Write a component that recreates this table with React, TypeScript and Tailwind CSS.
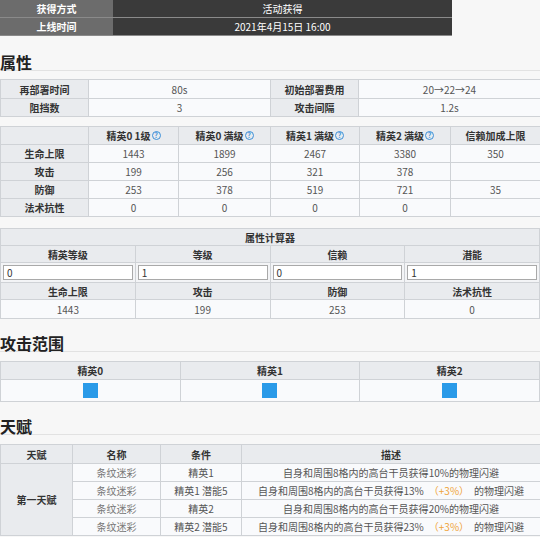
import React from "react";

const font = { fontFamily: '"Noto Sans CJK SC", "Noto Sans", sans-serif' };

const statRows = [
  { label: "生命上限", values: ["1443", "1899", "2467", "3380", "350"] },
  { label: "攻击", values: ["199", "256", "321", "378", ""] },
  { label: "防御", values: ["253", "378", "519", "721", "35"] },
  { label: "法术抗性", values: ["0", "0", "0", "0", ""] },
];

const talents = [
  { cond: "精英1", pct: "10%", bonus: false },
  { cond: "精英1 潜能5", pct: "13%", bonus: true },
  { cond: "精英2", pct: "20%", bonus: false },
  { cond: "精英2 潜能5", pct: "23%", bonus: true },
];

function Help() {
  return (
    <span className="ml-[1px] inline-flex h-[9px] w-[9px] items-center justify-center rounded-full border border-[#3b8fd9] text-[7px] leading-none text-[#3b8fd9]">
      ?
    </span>
  );
}

function Heading({ children, className }: { children: React.ReactNode; className: string }) {
  return (
    <div className={`border-b border-[#e2e2e2] text-[16px] font-bold leading-[16px] text-[#222] ${className}`}>
      {children}
    </div>
  );
}

const th = "flex items-center justify-center bg-[#e9ebee] font-bold text-[#333] border-r border-b border-[#cfd2d6]";
const td = "flex items-center justify-center bg-[#f9fafc] text-[#555] border-r border-b border-[#cfd2d6]";

export default function App() {
  return (
    <div className="h-[537px] w-[540px] overflow-hidden bg-[#f7f7f7] text-[10px]" style={font}>
      {/* 基本信息 */}
      <div className="grid w-[452px] grid-cols-[113px_339px] gap-y-[1px] bg-[#8a8a8a] pb-[1px] text-white">
        <div className="flex h-[17px] items-center justify-center bg-[#6c6c6c] font-bold">获得方式</div>
        <div className="flex h-[17px] items-center justify-center bg-[#3a3a3a]">活动获得</div>
        <div className="flex h-[17px] items-center justify-center bg-[#6c6c6c] font-bold">上线时间</div>
        <div className="flex h-[17px] items-center justify-center bg-[#3a3a3a]">2021年4月15日 16:00</div>
      </div>

      <Heading className="mt-[18px] mb-[8px]">属性</Heading>

      <div className="grid grid-cols-[88px_182px_88px_182px] border-l border-t border-[#cfd2d6]">
        <div className={`${th} h-[19px]`}>再部署时间</div>
        <div className={`${td} h-[19px]`}>80s</div>
        <div className={`${th} h-[19px]`}>初始部署费用</div>
        <div className={`${td} h-[19px]`}>20→22→24</div>
        <div className={`${th} h-[18px]`}>阻挡数</div>
        <div className={`${td} h-[18px]`}>3</div>
        <div className={`${th} h-[18px]`}>攻击间隔</div>
        <div className={`${td} h-[18px]`}>1.2s</div>
      </div>

      <div className="mt-[9px] grid grid-cols-[88px_90px_92px_89px_91px_90px] border-l border-t border-[#cfd2d6]">
        <div className={`${th} h-[18px]`}></div>
        <div className={`${th} h-[18px]`}>精英0 1级<Help /></div>
        <div className={`${th} h-[18px]`}>精英0 满级<Help /></div>
        <div className={`${th} h-[18px]`}>精英1 满级<Help /></div>
        <div className={`${th} h-[18px]`}>精英2 满级<Help /></div>
        <div className={`${th} h-[18px]`}>信赖加成上限</div>
        {statRows.map((r) => (
          <React.Fragment key={r.label}>
            <div className={`${th} h-[18px]`}>{r.label}</div>
            {r.values.map((v, i) => (
              <div key={i} className={`${td} h-[18px]`}>{v}</div>
            ))}
          </React.Fragment>
        ))}
      </div>

      {/* 属性计算器 */}
      <div className="mt-[11px] border-l border-t border-[#cfd2d6]">
        <div className={`${th} h-[17px]`}>属性计算器</div>
        <div className="grid grid-cols-4">
          {["精英等级", "等级", "信赖", "潜能"].map((h) => (
            <div key={h} className={`${th} h-[17px]`}>{h}</div>
          ))}
          {["0", "1", "0", "1"].map((v, i) => (
            <div key={i} className="flex h-[20px] items-center border-r border-b border-[#cfd2d6] bg-[#f3f4f6] px-[2px]">
              <div className="flex h-[15px] w-full items-center border border-[#a9a9a9] bg-white px-[3px] text-[#333]">{v}</div>
            </div>
          ))}
          {["生命上限", "攻击", "防御", "法术抗性"].map((h) => (
            <div key={h} className={`${th} h-[17px]`}>{h}</div>
          ))}
          {["1443", "199", "253", "0"].map((v, i) => (
            <div key={i} className={`${td} h-[19px]`}>{v}</div>
          ))}
        </div>
      </div>

      <Heading className="mt-[16px] mb-[9px]">攻击范围</Heading>
      <div className="grid grid-cols-3 border-l border-t border-[#cfd2d6]">
        {["精英0", "精英1", "精英2"].map((h) => (
          <div key={h} className={`${th} h-[18px]`}>{h}</div>
        ))}
        {[0, 1, 2].map((i) => (
          <div key={i} className={`${td} h-[22px]`}>
            <div className="h-[15px] w-[15px] bg-[#2a9ae8]" />
          </div>
        ))}
      </div>

      <Heading className="mt-[16px] mb-[9px]">天赋</Heading>
      <div className="grid grid-cols-[72px_88px_81px_299px] border-l border-t border-[#cfd2d6]">
        <div className={`${th} h-[19px]`}>天赋</div>
        <div className={`${th} h-[19px]`}>名称</div>
        <div className={`${th} h-[19px]`}>条件</div>
        <div className={`${th} h-[19px]`}>描述</div>
        <div className={`${th} row-span-4`}>第一天赋</div>
        {talents.map((t) => (
          <React.Fragment key={t.cond}>
            <div className={`${td} h-[18px] text-[#777]`}>条纹迷彩</div>
            <div className={`${td} h-[18px]`}>{t.cond}</div>
            <div className={`${td} h-[18px]`}>
              自身和周围8格内的高台干员获得{t.pct}
              {t.bonus && <span className="mx-[5px] text-[#f0a43a]">（+3%）</span>}
              的物理闪避
            </div>
          </React.Fragment>
        ))}
      </div>
    </div>
  );
}
